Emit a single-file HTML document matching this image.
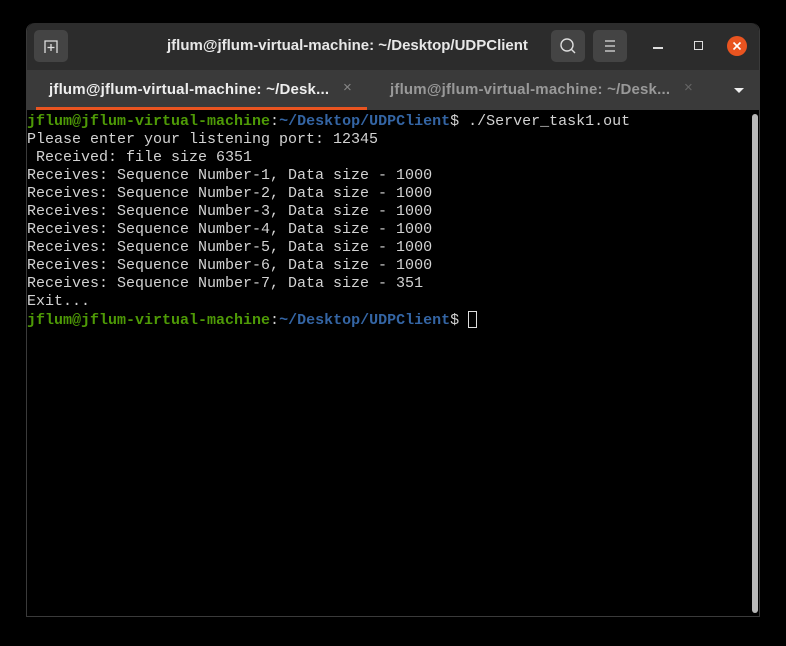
<!DOCTYPE html>
<html><head><style>
body{margin:0;background:#000;width:786px;height:646px;overflow:hidden;position:relative;font-family:"Liberation Sans",sans-serif}
.win{position:absolute;left:26px;top:23px;width:734px;height:594px;background:#000;border:1px solid #3a3a3a;border-top:none;border-radius:8px 8px 0 0;box-sizing:border-box;overflow:hidden}
.hdr{position:absolute;left:0;top:0;width:100%;height:47px;background:#2c2c2c;border-radius:8px 8px 0 0}
.btn{position:absolute;top:7px;width:34px;height:32px;background:#444;border-radius:5px}
.title{position:absolute;left:140px;top:14px;color:#e8e8e8;font-weight:bold;font-size:15px}
.tabs{position:absolute;left:0;top:47px;width:100%;height:40px;background:#3a3a3a}
.tab{position:absolute;top:11px;font-size:15px;font-weight:bold;letter-spacing:0.2px}
.term{position:absolute;left:0px;top:90px;font-family:"Liberation Mono",monospace;font-size:15px;line-height:18px;color:#d3d3d3;white-space:pre}
.g{color:#4e9a06;font-weight:bold}.b{color:#3465a4;font-weight:bold}
</style></head><body>
<div class="win">
 <div class="hdr">
  <div class="btn" style="left:7px"><svg width="34" height="32"><path d="M11 23V11h12v12" fill="none" stroke="#ddd" stroke-width="1.3"/><path d="M17 14v7M13.5 17.5h7" stroke="#ddd" stroke-width="1.3"/></svg></div>
  <div class="title">jflum@jflum-virtual-machine: ~/Desktop/UDPClient</div>
  <div class="btn" style="left:524px"><svg width="34" height="32"><circle cx="16" cy="15" r="6" fill="none" stroke="#ddd" stroke-width="1.4"/><path d="M20.5 19.5l3.5 3.5" stroke="#ddd" stroke-width="1.4"/></svg></div>
  <div class="btn" style="left:566px"><svg width="34" height="32"><path d="M12 11h10M12 16h10M12 21h10" stroke="#ddd" stroke-width="1.3"/></svg></div>
  <div style="position:absolute;left:626px;top:24px;width:10px;height:1.5px;background:#ddd"></div>
  <div style="position:absolute;left:667px;top:18px;width:7px;height:7px;border:1.3px solid #ddd"></div>
  <div style="position:absolute;left:700px;top:13px;width:20px;height:20px;border-radius:50%;background:#e95420"><svg width="20" height="20"><path d="M6.5 6.5l7 7M13.5 6.5l-7 7" stroke="#fff" stroke-width="1.6"/></svg></div>
 </div>
 <div class="tabs">
  <div class="tab" style="left:22px;color:#eee">jflum@jflum-virtual-machine: ~/Desk...</div>
  <div class="tab" style="left:316px;color:#888;font-weight:normal;font-size:15px;top:9px">×</div>
  <div style="position:absolute;left:9px;top:37px;width:331px;height:3px;background:#e95420"></div>
  <div class="tab" style="left:363px;color:#999">jflum@jflum-virtual-machine: ~/Desk...</div>
  <div class="tab" style="left:657px;color:#666;font-weight:normal;font-size:15px;top:9px">×</div>
  <svg style="position:absolute;left:706px;top:17px" width="12" height="7"><path d="M1 1h10L6 6z" fill="#eee"/></svg>
 </div>
 <div class="term"><span class="g">jflum@jflum-virtual-machine</span>:<span class="b">~/Desktop/UDPClient</span>$ ./Server_task1.out
Please enter your listening port: 12345
 Received: file size 6351
Receives: Sequence Number-1, Data size - 1000
Receives: Sequence Number-2, Data size - 1000
Receives: Sequence Number-3, Data size - 1000
Receives: Sequence Number-4, Data size - 1000
Receives: Sequence Number-5, Data size - 1000
Receives: Sequence Number-6, Data size - 1000
Receives: Sequence Number-7, Data size - 351
Exit...
<span class="g">jflum@jflum-virtual-machine</span>:<span class="b">~/Desktop/UDPClient</span>$ <span style="display:inline-block;width:9px;height:17px;border:1px solid #ddd;box-sizing:border-box;vertical-align:-4px"></span></div>
 <div style="position:absolute;left:725px;top:91px;width:6px;height:499px;background:#b8b8b8;border-radius:3px"></div>
</div>
</body></html>
